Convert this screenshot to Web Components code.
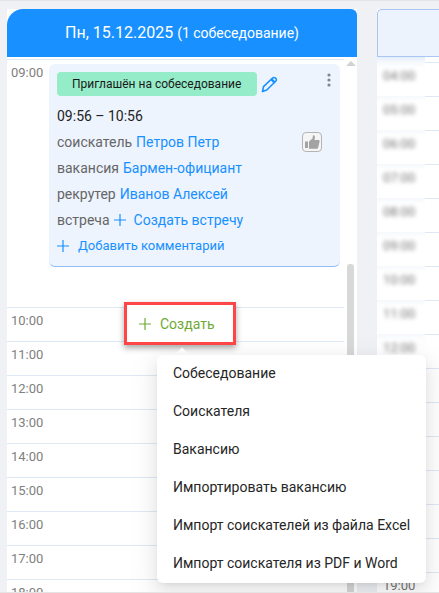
<!DOCTYPE html>
<html lang="ru">
<head>
<meta charset="utf-8">
<title>Календарь</title>
<style>
    html, body { margin: 0; padding: 0; overflow: hidden; }
    body { font-family: "Roboto", "Liberation Sans", sans-serif; }
</style>
</head>
<body>
<app-shell>
    <day-column title="Пн, 15.12.2025" note="(1 собеседование)">
        <time-row time="09:00" style="--row-height: 247px">
            <interview-card></interview-card>
        </time-row>
        <time-row time="10:00"></time-row>
        <time-row time="11:00"></time-row>
        <time-row time="12:00"></time-row>
        <time-row time="13:00"></time-row>
        <time-row time="14:00"></time-row>
        <time-row time="15:00"></time-row>
        <time-row time="16:00"></time-row>
        <time-row time="17:00"></time-row>
        <time-row time="18:00"></time-row>
    </day-column>
    <side-day>
        <side-row time="04:00" blurred></side-row>
        <side-row time="05:00" blurred></side-row>
        <side-row time="06:00" blurred></side-row>
        <side-row time="07:00" blurred></side-row>
        <side-row time="08:00" blurred></side-row>
        <side-row time="09:00" blurred></side-row>
        <side-row time="10:00" blurred></side-row>
        <side-row time="11:00" blurred></side-row>
        <side-row time="12:00" blurred></side-row>
        <side-row></side-row>
        <side-row></side-row>
        <side-row></side-row>
        <side-row></side-row>
        <side-row></side-row>
        <side-row></side-row>
        <side-row time="19:00"></side-row>
    </side-day>
</app-shell>

<script>
class AppShell extends HTMLElement {
    constructor() {
        super();
        this.attachShadow({ mode: "open" }).innerHTML = `
        <style>
            :host {
                display: flex;
                gap: 20px;
                box-sizing: border-box;
                height: 593px;
                padding: 8px 0 0 7px;
                overflow: hidden;
                background: #eff1f5;
                border-top: 1px solid #e4e4e4;
                border-bottom: 1px solid #e4e4e4;
            }
        </style>
        <slot></slot>`;
    }
}

class DayColumn extends HTMLElement {
    constructor() {
        super();
        this.attachShadow({ mode: "open" }).innerHTML = `
        <style>
            :host {
                display: block;
                position: relative;
                z-index: 2;
                flex: none;
                width: 350px;
                background: #fff;
            }
            .head {
                display: flex;
                align-items: center;
                justify-content: center;
                gap: 4px;
                height: 48px;
                box-sizing: border-box;
                padding-bottom: 1px;
                background: #1890ff;
                color: #fff;
                border-radius: 16px 6px 0 0;
                font-size: 16px;
            }
            .head small { font-size: 14px; }
            .body { display: flex; padding-top: 2px; }
            .rows { width: 337px; flex: none; }
            .scroll { flex: none; width: 7px; margin-left: 3px; padding-top: 2px; }
            .arrow {
                width: 0;
                margin-left: -1px;
                border: 5px solid transparent;
                border-top: 0;
                border-bottom: 5px solid #d2d2d2;
            }
            .thumb {
                margin-top: 198px;
                height: 340px;
                background: #d8d8d8;
                border-radius: 3px 3px 0 0;
            }
            create-menu { position: absolute; left: 117px; top: 293px; }
        </style>
        <div class="head">
            <span>${this.getAttribute("title")}</span>
            <small>${this.getAttribute("note")}</small>
        </div>
        <div class="body">
            <div class="rows"><slot></slot></div>
            <div class="scroll">
                <div class="arrow"></div>
                <div class="thumb"></div>
            </div>
        </div>
        <create-menu></create-menu>`;
    }
}

class TimeRow extends HTMLElement {
    constructor() {
        super();
        this.attachShadow({ mode: "open" }).innerHTML = `
        <style>
            :host {
                display: flex;
                height: var(--row-height, 33px);
                border-top: 1px solid #dfe8f5;
                font-size: 13px;
                color: #808080;
            }
            .time { flex: none; width: 38px; padding: 4px 0 0 4px; line-height: 18px; }
        </style>
        <div class="time">${this.getAttribute("time")}</div>
        <slot></slot>`;
    }
}

class InterviewCard extends HTMLElement {
    constructor() {
        super();
        this.attachShadow({ mode: "open" }).innerHTML = `
        <style>
            :host {
                display: block;
                position: relative;
                box-sizing: border-box;
                width: 291px;
                height: 203px;
                margin-top: 4px;
                padding: 8px 8px 0;
                background: #edf4fe;
                border-bottom: 1px solid #90bdf8;
                border-radius: 6px;
                font-size: 14px;
                line-height: 26px;
                color: #666;
            }
            a { color: #1890ff; text-decoration: none; }
            svg { display: block; flex: none; }
            .top { display: flex; align-items: center; gap: 4px; height: 24px; }
            .status {
                width: 200px;
                height: 24px;
                box-sizing: border-box;
                padding-left: 15px;
                background: #95ecc8;
                border-radius: 4px;
                font-size: 12px;
                line-height: 24px;
                color: #1a1a1a;
            }
            .range { margin-top: 7px; color: #222; }
            .row { display: flex; align-items: center; gap: 4px; height: 26px; }
            .row a { display: flex; align-items: center; gap: 8px; }
            .row a.comment { gap: 9px; font-size: 13px; }
            .kebab { position: absolute; right: 9px; top: 9px; }
            .like {
                position: absolute;
                left: 253px;
                top: 68px;
                width: 18px;
                height: 18px;
                border: 1px solid #b4b4b4;
                border-radius: 4px;
                background: #f5f5f5;
            }
        </style>
        <div class="top">
            <div class="status">Приглашён на собеседование</div>
            <svg width="17" height="17" viewBox="0 0 17 17" fill="none" stroke="#1890ff" stroke-width="1.6" stroke-linejoin="round">
                <path d="M1.5 15.5 L2.5 10.6 L11.6 2 Q13 .9 14.6 2.2 Q16 3.7 14.9 5 L5.8 14 Z"/>
                <path d="M10.3 3.2 L13.8 6.6" stroke-width="2.4"/>
            </svg>
        </div>
        <svg class="kebab" width="4" height="14" viewBox="0 0 4 14" fill="#7d8792">
            <circle cx="2" cy="2" r="1.6"/><circle cx="2" cy="7" r="1.6"/><circle cx="2" cy="12" r="1.6"/>
        </svg>
        <div class="range">09:56 – 10:56</div>
        <div class="row">соискатель <a>Петров Петр</a></div>
        <div class="row">вакансия <a>Бармен-официант</a></div>
        <div class="row">рекрутер <a>Иванов Алексей</a></div>
        <div class="row">встреча <a><plus-icon></plus-icon>Создать встречу</a></div>
        <div class="row"><a class="comment"><plus-icon></plus-icon>Добавить комментарий</a></div>
        <div class="like">
            <svg width="18" height="18" viewBox="0 0 18 18" fill="#a3a3a3">
                <path d="M2 8.5 H5 V15 H2 Z"/>
                <path d="M6 8.5 L9.5 5.5 L10 2 Q12 2 12 4.5 L11.5 7 H16 Q17 7.5 16.5 9 L15 15 Q14.7 15.8 14 15.8 H6 Z"/>
            </svg>
        </div>`;
    }
}

class PlusIcon extends HTMLElement {
    constructor() {
        super();
        this.attachShadow({ mode: "open" }).innerHTML = `
        <style>
            :host { display: block; flex: none; width: 12px; height: 12px; }
            svg { display: block; }
        </style>
        <svg width="12" height="12" viewBox="0 0 12 12" stroke="currentColor" stroke-width="1.2">
            <path d="M0 6 H12 M6 0 V12"/>
        </svg>`;
    }
}

class CreateMenu extends HTMLElement {
    constructor() {
        super();
        const items = [
            "Собеседование",
            "Соискателя",
            "Вакансию",
            "Импортировать вакансию",
            "Импорт соискателей из файла Excel",
            "Импорт соискателя из PDF и Word"
        ];
        this.attachShadow({ mode: "open" }).innerHTML = `
        <style>
            :host { display: block; width: 302px; }
            .button {
                display: flex;
                align-items: center;
                gap: 9px;
                box-sizing: border-box;
                width: 112px;
                height: 43px;
                padding-left: 12px;
                border: 3px solid #ff4646;
                box-shadow: 0 3px 6px rgba(0, 0, 0, .35);
                color: #6fa935;
                font-size: 14px;
                background: #fff;
            }
            .caret {
                position: absolute;
                left: 52px;
                top: 48px;
                width: 12px;
                height: 12px;
                background: #fff;
                transform: rotate(45deg);
            }
            .menu {
                position: relative;
                box-sizing: border-box;
                width: 269px;
                height: 228px;
                margin: 10px 0 0 33px;
                padding: 0 16px;
                background: #fff;
                border-radius: 6px;
                box-shadow: 0 3px 6px -4px rgba(0, 0, 0, .12), 0 6px 16px rgba(0, 0, 0, .08), 0 9px 28px 8px rgba(0, 0, 0, .05);
                font-size: 14px;
                color: #262626;
            }
            .item { height: 38px; line-height: 36px; white-space: nowrap; }
        </style>
        <div class="button"><plus-icon></plus-icon>Создать</div>
        <div class="caret"></div>
        <div class="menu">
            ${items.map(i => `<div class="item">${i}</div>`).join("")}
        </div>`;
    }
}

class SideDay extends HTMLElement {
    constructor() {
        super();
        this.attachShadow({ mode: "open" }).innerHTML = `
        <style>
            :host { display: block; flex: 1; min-width: 0; background: #fff; }
            .head {
                box-sizing: border-box;
                height: 48px;
                background: #ecf3fd;
                border: 1px solid #a9c7f2;
                border-right: 0;
                border-radius: 5px 0 0 0;
            }
            .gap { height: 5px; background: linear-gradient(#e3edfb, #f6f9fe); width: 48px; }
        </style>
        <div class="head"></div>
        <div class="gap"></div>
        <slot></slot>`;
    }
}

class SideRow extends HTMLElement {
    constructor() {
        super();
        const time = this.getAttribute("time") || "";
        const blur = this.hasAttribute("blurred") ? "filter: blur(2px);" : "";
        this.attachShadow({ mode: "open" }).innerHTML = `
        <style>
            :host {
                display: flex;
                height: 33px;
                border-top: 1px solid #dfe8f5;
                font-size: 13px;
                color: #777;
            }
            .time {
                flex: none;
                box-sizing: border-box;
                width: 48px;
                height: 34px;
                margin-top: -1px;
                padding: 5px 0 0 6px;
                line-height: 18px;
                background: linear-gradient(#f6f8fc, #fff 6px);
            }
            span { ${blur} display: block; }
        </style>
        <div class="time"><span>${time}</span></div>`;
    }
}

customElements.define("plus-icon", PlusIcon);
customElements.define("create-menu", CreateMenu);
customElements.define("interview-card", InterviewCard);
customElements.define("time-row", TimeRow);
customElements.define("day-column", DayColumn);
customElements.define("side-row", SideRow);
customElements.define("side-day", SideDay);
customElements.define("app-shell", AppShell);
</script>
</body>
</html>
